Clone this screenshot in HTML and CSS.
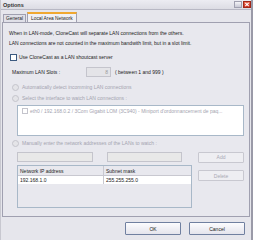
FILE: index.html
```html
<!DOCTYPE html>
<html>
<head>
<meta charset="utf-8">
<link rel="stylesheet" href="styles.css">
</head>
<body>
<div class="window">
  <div class="titlebar">
    <span class="title">Options</span>
    <div class="tbtns">
      <span class="tb help"></span>
      <span class="tb close"><svg width="7" height="7" viewBox="0 0 7 7"><path d="M1.5 1.5 L5.5 5.5 M5.5 1.5 L1.5 5.5" stroke="#fff" stroke-width="1.2"/></svg></span>
    </div>
  </div>
  <div class="tabs">
    <span class="tab">General</span>
    <span class="tab active">Local Area Network</span>
  </div>
  <div class="panel">
    <div class="line">When in LAN-mode, CloneCast will separate LAN connections from the others.</div>
    <div class="line">LAN connections are not counted in the maximum bandwith limit, but in a slot limit.</div>
    <div class="row chkrow"><span class="chk"></span><span>Use CloneCast as a LAN shoutcast server</span></div>
    <div class="row slots"><span class="slabel">Maximum LAN Slots :</span><span class="num">8</span><span>( between 1 and 999 )</span></div>
    <div class="row radio r1 dis"><span class="rad"></span><span>Automatically detect incomming LAN connections</span></div>
    <div class="row radio r2 dis"><span class="rad"></span><span>Select the interface to watch LAN connections :</span></div>
    <div class="list"><div class="item"><span class="chk dchk"></span><span>eth0 / 192.168.0.2 / 3Com Gigabit LOM (3C940) - Miniport d'ordonnancement de paq...</span></div></div>
    <div class="row radio r3 dis"><span class="rad"></span><span>Manually enter the network addresses of the LANs to watch :</span></div>
    <div class="row inputs"><span class="inp i1"></span><span class="inp i2"></span><span class="btn dbtn">Add</span></div>
    <div class="tablerow">
      <div class="table">
        <div class="thead"><span class="c1">Network IP address</span><span class="c2">Subnet mask</span></div>
        <div class="trow"><span class="c1">192.168.1.0</span><span class="c2">255.255.255.0</span></div>
      </div>
      <span class="btn dbtn del">Delete</span>
    </div>
  </div>
  <div class="footer">
    <span class="btn ok">OK</span>
    <span class="btn cancel">Cancel</span>
  </div>
</div>
</body>
</html>
```
FILE: styles.css
```css
html, body { margin: 0; padding: 0; }
body { width: 253px; height: 240px; overflow: hidden; background: #e6e6ec; font-family: "Liberation Sans", Arial, sans-serif; font-size: 5px; color: #222; }
.window { width: 253px; height: 240px; box-sizing: border-box; background: #e6e6ec; border-right: 2px solid #9a9aa8; border-left: 1px solid #c8c8d0; display: flex; flex-direction: column; }
.titlebar { height: 10px; box-sizing: border-box; border-bottom: 1px solid #b8b8c4; background: linear-gradient(#ececf2, #dcdce4); display: flex; align-items: center; justify-content: space-between; padding-left: 2px; }
.title { font-weight: bold; font-size: 5.5px; color: #333; }
.tbtns { display: flex; align-items: center; gap: 0; }
.tb { width: 8px; height: 7px; box-sizing: border-box; display: flex; align-items: center; justify-content: center; }
.help { background: linear-gradient(#f4f4f8, #c8c8d4); border: 1px solid #a0a0b0; margin-right: 1px; }
.close { background: linear-gradient(#ec6a50, #c83020); border: 1px solid #a02818; }
.tabs { display: flex; align-items: flex-end; padding-left: 2px; height: 12px; }
.tab { height: 8px; box-sizing: border-box; border: 1px solid #a0a0b0; border-bottom: none; padding: 0 2px; display: flex; align-items: center; background: #e0e0e8; font-size: 4.8px; }
.tab.active { height: 10px; background: #f0f0f4; border-top: 2px solid #f0a830; margin-left: 1px; padding: 0 3px; }
.panel { margin-left: 1px; width: 248px; height: 195px; box-sizing: border-box; border: 1px solid #a0a0b0; background: #e8e8ee; padding: 5px 5px 0 7px; display: flex; flex-direction: column; }
.line { height: 10px; line-height: 10px; margin-left: -1px; white-space: nowrap; }
.row { display: flex; align-items: center; height: 10px; white-space: nowrap; }
.chkrow { margin-top: 4px; gap: 2px; }
.chk { width: 7px; height: 7px; box-sizing: border-box; border: 1px solid #3c5a80; background: #fff; display: inline-block; }
.slots { margin-top: 5px; margin-left: 2px; }
.slabel { width: 74px; }
.num { width: 25px; height: 10px; box-sizing: border-box; border: 1px solid #c4c4cc; background: #e4e4e8; color: #999; text-align: right; padding-right: 2px; line-height: 8px; margin-right: 4px; }
.radio { gap: 3px; margin-left: 2px; }
.r1 { margin-top: 5px; }
.r2 { margin-top: 1px; }
.r3 { margin-top: 2px; }
.dis { color: #a4a4b0; }
.rad { width: 5px; height: 5px; border-radius: 50%; border: 1px solid #c4c4cc; background: #e4e4e8; display: inline-block; }
.list { margin-top: 2px; margin-left: 7px; width: 227px; height: 31px; box-sizing: border-box; border: 1px solid #a8b8c8; background: #fff; padding: 2px 0 0 4px; }
.item { display: flex; align-items: center; gap: 2px; color: #a4a4b0; white-space: nowrap; }
.dchk { border-color: #c4c4cc; width: 6px; height: 6px; }
.inputs { margin-top: 4px; margin-left: 7px; }
.inp { height: 10px; box-sizing: border-box; border: 1px solid #c4c4cc; background: #e8e8e8; }
.i1 { width: 76px; }
.i2 { width: 75px; margin-left: 14px; }
.btn { display: flex; align-items: center; justify-content: center; box-sizing: border-box; border: 1px solid #7080a0; border-radius: 1px; background: linear-gradient(#fcfcfe, #e4e4ec); }
.dbtn { width: 46px; height: 11px; border-color: #c8c8d0; color: #a8a8b4; background: #eeeef2; }
.inputs .dbtn { margin-left: 16px; }
.tablerow { display: flex; margin-top: 3px; margin-left: 7px; align-items: flex-start; }
.table { width: 175px; height: 43px; box-sizing: border-box; border: 1px solid #a8b8c8; background: #e8e8ee; }
.thead, .trow { display: flex; height: 8px; align-items: center; }
.thead { height: 9px; border-bottom: 1px solid #c8c8d0; }
.trow { background: #fff; }
.c1 { width: 86px; padding-left: 2px; box-sizing: border-box; border-right: 1px solid #c8c8d0; height: 100%; display: flex; align-items: center; }
.c2 { padding-left: 2px; }
.del { margin-left: 6px; margin-top: 5px; }
.footer { display: flex; justify-content: flex-end; gap: 8px; padding: 5px 6px 0 0; }
.ok, .cancel { width: 56px; height: 13px; }
```
